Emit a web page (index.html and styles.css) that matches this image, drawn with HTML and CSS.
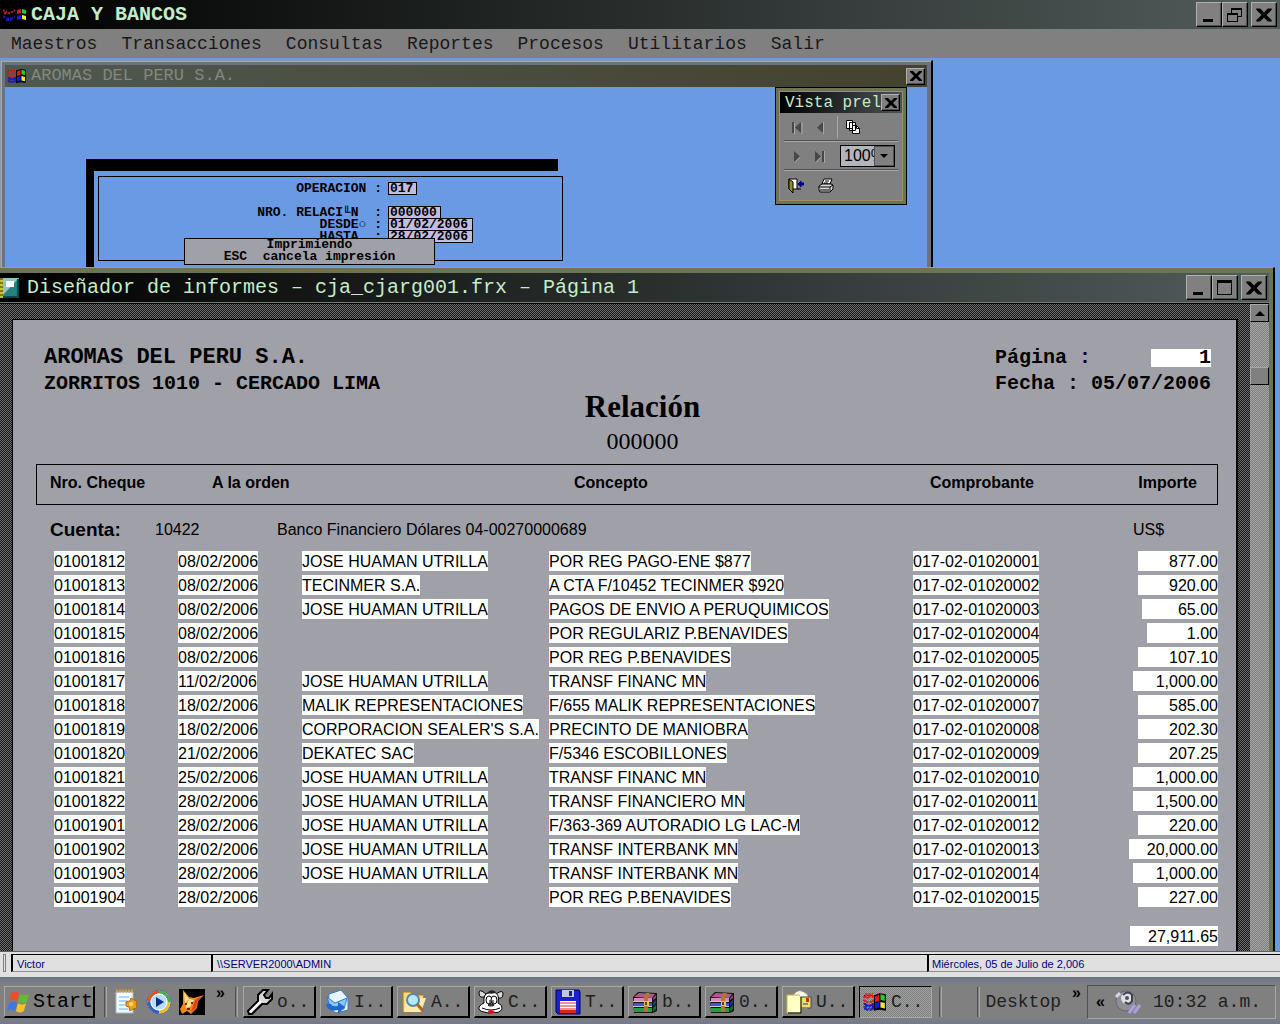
FILE: index.html
```html
<!DOCTYPE html>
<html lang="es">
<head>
<meta charset="utf-8">
<meta name="viewport" content="width=device-width, initial-scale=1">
<title>CAJA Y BANCOS</title>
<link rel="stylesheet" href="styles.css">
</head>
<body>
<svg class="defs" aria-hidden="true">
  <symbol id="flag" viewBox="0 0 22 18">
    <path d="M1 3h10v12H1z" fill="none" stroke="#000" stroke-width="1" stroke-dasharray="1 2"/>
    <path d="M1 4h2v1h3V4h4M1 8h3v1h3V8h3M2 2h7" stroke="#e02020" stroke-width="2" fill="none" stroke-dasharray="2 1"/>
    <path d="M1 11h3v1h3v-1h3M1 15h3v1h3v-1h3M2 13h8" stroke="#1818c8" stroke-width="2" fill="none" stroke-dasharray="2 1"/>
    <path d="M10 3l5-2 6 1v15l-6-1-5 1z" fill="#000"/>
    <path d="M11 4l4-2v6l-4 1z" fill="#e01818"/><path d="M16 2l4 1v5l-4-1z" fill="#20d020"/>
    <path d="M11 10l4-1v5l-4 1z" fill="#1818e0"/><path d="M16 9l4 1v5l-4-1z" fill="#f4f020"/>
  </symbol>
  <symbol id="close" viewBox="0 0 14 14"><path d="M1 2h3l3 3 3-3h3v1L9 7l4 4v1h-3L7 9l-3 3H1v-1l4-4-4-4z" fill="#000"/></symbol>
  <symbol id="minimize" viewBox="0 0 14 14"><path d="M1 11h10v3H1z" fill="#000"/></symbol>
  <symbol id="restore" viewBox="0 0 16 14"><path d="M4 0h11v9h-4v5H0V5h4zM5 2v3h6v3h3V2zM1 7v6h9V7z" fill="#000" fill-rule="evenodd"/></symbol>
  <symbol id="maximize" viewBox="0 0 16 16"><path d="M0 0h15v15H0zM1 3v11h13V3z" fill="#000" fill-rule="evenodd"/></symbol>
  <symbol id="books" viewBox="0 0 26 22">
    <path d="M1 6l5-5 19 1v18l-4 2H2z" fill="#151515"/>
    <path d="M2 6l5-4 16 1-3 4z" fill="#b05890"/><path d="M2 7h18v3H2z" fill="#d888c0"/><path d="M2 12h18v3H2z" fill="#3858e0"/><path d="M2 17h18v4H2z" fill="#20a040"/>
    <path d="M21 7l3-3v3l-3 2z" fill="#a04070"/><path d="M21 12l3-3v3l-3 3z" fill="#2038a0"/><path d="M21 17l3-3v4l-3 3z" fill="#107030"/>
    <path d="M1 10h19v1H1zM1 15h19v1H1z" fill="#c8c8c8"/><path d="M14 2h4l-2 4v15h-4V6z" fill="#b07828"/><path d="M12 10h5v5h-5z" fill="#e8c050"/><path d="M13 11h2v3h-2z" fill="#604010"/>
  </symbol>
</svg>

<header class="app-title">
  <svg class="app-flag" viewBox="0 0 23 14"><path d="M0 2l3 2 3 1 3-1 3-2M1 5l2 1" stroke="#c02020" stroke-width="2" fill="none" stroke-dasharray="2 1"/><path d="M0 8l3 2 4 1 5-2M3 12h6" stroke="#1818b0" stroke-width="2" fill="none" stroke-dasharray="3 1"/><path d="M14 2l4-1v4l-4 1z" fill="#e01818"/><path d="M19 1l4 1v4l-4-1z" fill="#20d020"/><path d="M14 8l4-1v4l-4 1z" fill="#1818e0"/><path d="M19 7l4 1v4l-4-1z" fill="#f4f020"/></svg>
  <h1 class="title-text">CAJA Y BANCOS</h1>
  <div class="window-buttons">
    <button class="win-btn" aria-label="Minimizar"><svg width="14" height="14"><use href="#minimize"/></svg></button>
    <button class="win-btn" aria-label="Restaurar"><svg width="16" height="14"><use href="#restore"/></svg></button>
    <button class="win-btn apart" aria-label="Cerrar"><svg width="18" height="18"><use href="#close"/></svg></button>
  </div>
</header>

<nav class="menu">
  <button>Maestros</button><button>Transacciones</button><button>Consultas</button><button>Reportes</button><button>Procesos</button><button>Utilitarios</button><button>Salir</button>
</nav>

<main class="workspace">
  <section class="window company">
    <div class="company-title">
      <svg width="20" height="16" viewBox="0 0 22 18"><use href="#flag"/></svg>
      <h2>AROMAS DEL PERU S.A.</h2>
      <button class="win-btn small" aria-label="Cerrar"><svg width="14" height="14"><use href="#close"/></svg></button>
    </div>
    <div class="company-body">
      <form class="filter">
        <div class="filter-box">
          <div class="field spaced"><label for="op">OPERACION :</label><input id="op" class="w3" value="017"></div>
          <div class="field"><label for="rel">NRO. RELACI╙N  :</label><input id="rel" class="w6" value="000000"></div>
          <div class="field"><label for="desde">DESDE○ :</label><input id="desde" class="w10" value="01/02/2006"></div>
          <div class="field"><label for="hasta">HASTA  :</label><input id="hasta" class="w10" value="28/02/2006"></div>
        </div>
      </form>
      <div class="printing" role="status"><span>Imprimiendo</span><span>ESC  cancela impresión</span></div>
    </div>
  </section>

  <section class="preview-bar">
    <div class="preview-title"><h2>Vista prel</h2>
      <button class="win-btn small" aria-label="Cerrar"><svg width="14" height="14"><use href="#close"/></svg></button>
    </div>
    <div class="tools">
      <button aria-label="Primera página"><svg width="12" height="13" viewBox="0 0 12 13"><path d="M1 1h2v11H1zM10 1v11L4 6.500z" fill="#484848"/><path d="M11 1v12M3.500 2v11" stroke="#a8a8a8"/></svg></button>
      <button aria-label="Anterior"><svg width="12" height="13" viewBox="0 0 12 13"><path d="M9 1v11L3 6.500z" fill="#484848"/><path d="M9.500 1v12" stroke="#a8a8a8"/></svg></button>
      <span class="divider"></span>
      <button aria-label="Ir a página"><svg width="14" height="14" viewBox="0 0 14 14"><path d="M.5.5h6v8h-6zM3.500 2.500h6v8h-6zM6.500 5.500h4l3 3v5h-7z" fill="#fff" stroke="#000"/><path d="M10.500 5.500v3h3" fill="none" stroke="#000"/></svg></button>
    </div>
    <div class="tools">
      <button aria-label="Siguiente"><svg width="12" height="13" viewBox="0 0 12 13"><path d="M3 1v11l6-5.500z" fill="#484848"/><path d="M9 7l-5 5.500" stroke="#a8a8a8"/></svg></button>
      <button aria-label="Última página"><svg width="12" height="13" viewBox="0 0 12 13"><path d="M1 1v11l6-5.500zM8 1h2v11H8z" fill="#484848"/><path d="M10.500 1v12M7 7l-5 5.500" stroke="#a8a8a8"/></svg></button>
      <div class="zoom"><select aria-label="Zoom"><option>100%</option></select><span class="zoom-arrow"><svg width="8" height="4" viewBox="0 0 8 4"><path d="M0 0h8L4 4z"/></svg></span></div>
    </div>
    <div class="tools last">
      <button aria-label="Cerrar vista"><svg width="16" height="16" viewBox="0 0 16 16"><path d="M1 1h8v10H1z" fill="#fff" stroke="#000"/><path d="M1 1l4 3v11l-4-4z" fill="#909018" stroke="#000"/><path d="M9 11h4" stroke="#000"/><path d="M10 6l3-3v2h3v2h-3v2z" fill="#000090" stroke="#000090"/></svg></button>
      <button aria-label="Imprimir"><svg width="16" height="15" viewBox="0 0 16 15"><path d="M4 6l2-5h8l-2 5z" fill="#fff" stroke="#000"/><path d="M7 3h4M6 5h4" stroke="#000"/><path d="M1 8l3-2h9l2 1v4l-3 3H2l-1-2z" fill="#d8d8d8" stroke="#000"/><path d="M1 9h11v4M2 12h9M12 9l3-2" stroke="#000" fill="none"/></svg></button>
    </div>
  </section>

  <section class="report">
    <div class="report-title">
      <svg class="report-icon" width="20" height="20" viewBox="0 0 20 20"><path d="M0 0h3v20H0z" fill="#c8c040"/><path d="M0 1h3M0 5h3M0 9h3M0 13h3M0 17h3" stroke="#303010"/><path d="M3 0h16v19H3z" fill="#258080"/><path d="M3 0h16L3 17z" fill="#90c8c0"/><path d="M6 3h8v6H6z" fill="#fff"/><path d="M18 1v18H3" stroke="#104848" stroke-width="2" fill="none"/></svg>
      <h2 class="title-text">Diseñador de informes – cja_cjarg001.frx – Página 1</h2>
      <div class="window-buttons">
        <button class="win-btn" aria-label="Minimizar"><svg width="14" height="14"><use href="#minimize"/></svg></button>
        <button class="win-btn" aria-label="Maximizar"><svg width="16" height="16"><use href="#maximize"/></svg></button>
        <button class="win-btn apart" aria-label="Cerrar"><svg width="18" height="18"><use href="#close"/></svg></button>
      </div>
    </div>
    <div class="report-client">
      <article class="sheet">
        <div class="letterhead">
          <div class="company-lines"><p class="company-name">AROMAS DEL PERU S.A.</p><p>ZORRITOS 1010 - CERCADO LIMA</p></div>
          <div class="report-name"><h3>Relación</h3><p>000000</p></div>
          <div class="page-info"><p><span>Página :</span><span class="page-no">1</span></p><p>Fecha : 05/07/2006</p></div>
        </div>
        <table>
          <colgroup><col class="c-cheque"><col class="c-fecha"><col class="c-orden"><col><col class="c-comp"><col class="c-imp"></colgroup>
          <thead><tr><th>Nro. Cheque</th><th colspan="2">A la orden</th><th>Concepto</th><th>Comprobante</th><th>Importe</th></tr></thead>
          <tbody>
            <tr class="account"><td colspan="5"><div class="account-line"><b>Cuenta:</b><span class="account-no">10422</span><span>Banco Financiero Dólares 04-00270000689</span></div></td><td>US$</td></tr>
            <tr><td><span>01001812</span></td><td><span>08/02/2006</span></td><td><span>JOSE HUAMAN UTRILLA</span></td><td><span>POR REG PAGO-ENE $877</span></td><td><span>017-02-01020001</span></td><td><span>       877.00</span></td></tr>
            <tr><td><span>01001813</span></td><td><span>08/02/2006</span></td><td><span>TECINMER S.A.</span></td><td><span>A CTA F/10452 TECINMER $920</span></td><td><span>017-02-01020002</span></td><td><span>       920.00</span></td></tr>
            <tr><td><span>01001814</span></td><td><span>08/02/2006</span></td><td><span>JOSE HUAMAN UTRILLA</span></td><td><span>PAGOS DE ENVIO A PERUQUIMICOS</span></td><td><span>017-02-01020003</span></td><td><span>        65.00</span></td></tr>
            <tr><td><span>01001815</span></td><td><span>08/02/2006</span></td><td></td><td><span>POR REGULARIZ P.BENAVIDES</span></td><td><span>017-02-01020004</span></td><td><span>         1.00</span></td></tr>
            <tr><td><span>01001816</span></td><td><span>08/02/2006</span></td><td></td><td><span>POR REG P.BENAVIDES</span></td><td><span>017-02-01020005</span></td><td><span>       107.10</span></td></tr>
            <tr><td><span>01001817</span></td><td><span>11/02/2006</span></td><td><span>JOSE HUAMAN UTRILLA</span></td><td><span>TRANSF FINANC MN</span></td><td><span>017-02-01020006</span></td><td><span>     1,000.00</span></td></tr>
            <tr><td><span>01001818</span></td><td><span>18/02/2006</span></td><td><span>MALIK REPRESENTACIONES</span></td><td><span>F/655 MALIK REPRESENTACIONES</span></td><td><span>017-02-01020007</span></td><td><span>       585.00</span></td></tr>
            <tr><td><span>01001819</span></td><td><span>18/02/2006</span></td><td><span>CORPORACION SEALER'S S.A.</span></td><td><span>PRECINTO DE MANIOBRA</span></td><td><span>017-02-01020008</span></td><td><span>       202.30</span></td></tr>
            <tr><td><span>01001820</span></td><td><span>21/02/2006</span></td><td><span>DEKATEC SAC</span></td><td><span>F/5346 ESCOBILLONES</span></td><td><span>017-02-01020009</span></td><td><span>       207.25</span></td></tr>
            <tr><td><span>01001821</span></td><td><span>25/02/2006</span></td><td><span>JOSE HUAMAN UTRILLA</span></td><td><span>TRANSF FINANC MN</span></td><td><span>017-02-01020010</span></td><td><span>     1,000.00</span></td></tr>
            <tr><td><span>01001822</span></td><td><span>28/02/2006</span></td><td><span>JOSE HUAMAN UTRILLA</span></td><td><span>TRANSF FINANCIERO MN</span></td><td><span>017-02-01020011</span></td><td><span>     1,500.00</span></td></tr>
            <tr><td><span>01001901</span></td><td><span>28/02/2006</span></td><td><span>JOSE HUAMAN UTRILLA</span></td><td><span>F/363-369 AUTORADIO LG LAC-M</span></td><td><span>017-02-01020012</span></td><td><span>       220.00</span></td></tr>
            <tr><td><span>01001902</span></td><td><span>28/02/2006</span></td><td><span>JOSE HUAMAN UTRILLA</span></td><td><span>TRANSF INTERBANK MN</span></td><td><span>017-02-01020013</span></td><td><span>    20,000.00</span></td></tr>
            <tr><td><span>01001903</span></td><td><span>28/02/2006</span></td><td><span>JOSE HUAMAN UTRILLA</span></td><td><span>TRANSF INTERBANK MN</span></td><td><span>017-02-01020014</span></td><td><span>     1,000.00</span></td></tr>
            <tr><td><span>01001904</span></td><td><span>28/02/2006</span></td><td></td><td><span>POR REG P.BENAVIDES</span></td><td><span>017-02-01020015</span></td><td><span>       227.00</span></td></tr>
            <tr class="total"><td colspan="5"></td><td><span>    27,911.65</span></td></tr>
          </tbody>
        </table>
      </article>
      <div class="scrollbar"><button class="scroll-up" aria-label="Subir"><svg width="10" height="5" viewBox="0 0 10 5"><path d="M0 5h10L5 0z"/></svg></button><div class="thumb"></div></div>
    </div>
  </section>
</main>

<div class="status"><span class="grip"></span><span class="st-user">Victor</span><span class="st-server">\\SERVER2000\ADMIN</span><span class="st-date">Miércoles, 05 de Julio de 2,006</span></div>

<footer class="taskbar">
  <button class="start"><svg width="24" height="22" viewBox="0 0 24 22"><path d="M4 2q4-3 8 0l-2 8q-4-2-8 0z" fill="#e8502c"/><path d="M13 3q4 2 9 0l-2 8q-5 2-9 0z" fill="#68b838"/><path d="M2 12q4-3 8 0l-2 8q-4-3-8 0z" fill="#3c78e0"/><path d="M11 12q4 3 8 0l-2 8q-4 3-8 0z" fill="#f4c030"/></svg><span>Start</span></button>
  <span class="bar first"></span>
  <div class="quick">
    <button aria-label="Notas"><svg width="26" height="26" viewBox="0 0 26 26"><path d="M3 3h17v21H3z" fill="#f4f8ff" stroke="#a8b8c8"/><path d="M3 2h17" stroke="#d0a040" stroke-width="3" stroke-dasharray="2 1"/><path d="M6 8h10M6 12h9M6 16h6M6 20h9" stroke="#60b8e8"/><path d="M13 13l4-1 1-3 3 2 3 1-1 3 1 4-4 1-3 2-1-4-3-1z" fill="#f0a018" stroke="#b06808"/><circle cx="18" cy="15" r="2" fill="#ffe080"/></svg></button>
    <button aria-label="Reproductor"><svg width="26" height="26" viewBox="0 0 26 26"><circle cx="13" cy="13" r="12" fill="#d8e4f0" stroke="#5068a0"/><path d="M13 3a10 10 0 0 0-10 10" stroke="#e05020" stroke-width="3" fill="none"/><path d="M13 3a10 10 0 0 1 10 10" stroke="#50a850" stroke-width="3" fill="none"/><path d="M23 13a10 10 0 0 1-10 10" stroke="#e8c030" stroke-width="3" fill="none"/><path d="M3 13a10 10 0 0 0 10 10" stroke="#3060c8" stroke-width="3" fill="none"/><circle cx="13" cy="13" r="8" fill="#b8dcff" stroke="#fff"/><path d="M10 8l8 5-8 5z" fill="#10308c"/></svg></button>
    <button aria-label="FoxPro"><svg width="26" height="26" viewBox="0 0 26 26"><path d="M0 0h26v26H0z"/><path d="M4 1l6 7 5 1 10-3-6 6-1 7-6 6-4-3-5 3-2-5 3-5z" fill="#f08820"/><path d="M5 3l5 7-4 5zM10 10l5 1-4 7-5 1z" fill="#ffe090"/><path d="M16 11l7-4-5 6-1 6-5 4z" fill="#e04010"/><path d="M6 15h2M12 14h2M8 20h3" stroke="#802000" stroke-width="2"/></svg></button>
  </div>
  <span class="chevron">»</span>
  <span class="bar second"></span>
  <div class="tasks">
    <button><svg width="26" height="26" viewBox="0 0 26 26"><path d="M1 22l10-10V6l5-5h5l-4 5 2 3h3l3-4v5l-5 5h-5L5 25H2z" fill="#d8d8d8" stroke="#000" stroke-width="2"/><path d="M3 23l11-11" stroke="#fff" stroke-width="2"/></svg>o..</button>
    <button><svg width="26" height="26" viewBox="0 0 26 26"><path d="M5 5L17 1l7 8v12l-12 3-8-6z" fill="#e8f4ff" stroke="#3878c0"/><path d="M3 8l8 6 12-5-3 11-13 1z" fill="#88c8ff" stroke="#3878c0"/><path d="M2 15q1 8 12 6v4l7-7-7-5v4q-6 1-7-2z" fill="#2068d0"/></svg>I..</button>
    <button><svg width="26" height="26" viewBox="0 0 26 26"><path d="M2 3h8l2 3h11l-3 17H2z" fill="#f8d878" stroke="#a87820"/><path d="M5 9h20l-5 14H3z" fill="#ffecac"/><circle cx="12" cy="11" r="6" fill="#b8e8f8" stroke="#5888a8" stroke-width="2"/><path d="M16 15l6 7" stroke="#a86828" stroke-width="3"/></svg>A..</button>
    <button><svg width="26" height="26" viewBox="0 0 26 26"><path d="M8 5Q1-1 1 4t5 4M18 5q7-5 7 0t-5 4" fill="#d8d8d8" stroke="#000"/><path d="M6 14Q5 5 10 4l6-1q6 2 4 11 5 2 4 6-3 5-9 3-5 2-9 0-6-1-5-5 2-3 5-4z" fill="#f8f8f8" stroke="#000"/><path d="M9 4q4-5 9-1-2 3-9 1" fill="#222"/><ellipse cx="11" cy="11" rx="3" ry="4" fill="#fff" stroke="#000"/><ellipse cx="16" cy="11" rx="3" ry="4" fill="#fff" stroke="#000"/><path d="M12 11v3M15 11v3" stroke="#000" stroke-width="1"/><ellipse cx="13" cy="16" rx="3" ry="1" fill="#888" stroke="#000"/><path d="M4 19q9 4 18 0" stroke="#000" fill="none"/><ellipse cx="13" cy="23" rx="3" ry="2" fill="#e01020"/></svg>C..</button>
    <button><svg width="26" height="26" viewBox="0 0 26 26"><path d="M1 1h23l1 2v22H3l-2-2z" fill="#1820d0" stroke="#000060"/><path d="M7 1h12v7H7z" fill="#c0c8e0"/><path d="M14 2h3v5h-3z" fill="#1820a0"/><path d="M5 12h16v12H5z" fill="#fff"/><path d="M5 14h16M5 17h16M5 20h16" stroke="#e02020"/><path d="M5 21h16v3H5z" fill="#e02020"/></svg>T..</button>
    <button><svg width="26" height="22"><use href="#books"/></svg>b..</button>
    <button><svg width="26" height="22"><use href="#books"/></svg>0..</button>
    <button><svg width="26" height="26" viewBox="0 0 26 26"><path d="M7 6q6-9 15 0v14H7z" fill="#f8f8e8" stroke="#888"/><path d="M12 8h13v11H12z" fill="#f0e060" stroke="#444"/><path d="M20 9h3v4h-3z" fill="#d82020"/><path d="M17 15h5" stroke="#2030c0"/><path d="M1 6h12l2 2v16H1z" fill="#ffffc8" stroke="#c8b840"/><path d="M15 8v16H2" fill="none" stroke="#000"/></svg>U..</button>
    <button class="active"><svg width="24" height="20" viewBox="0 0 22 18"><use href="#flag"/></svg>C..</button>
  </div>
  <span class="bar third"></span>
  <span class="bar fourth"></span>
  <a class="desk" href="#">Desktop</a>
  <span class="chevron">»</span>
  <div class="tray"><span class="tray-more">«</span><svg width="28" height="26" viewBox="0 0 28 26"><circle cx="12" cy="12" r="10" fill="#909094" stroke="#686870"/><circle cx="13" cy="9" r="6" fill="#e0e0e8"/><path d="M9 6q5-5 9 0v6q-3 5-7 1" fill="none" stroke="#404048" stroke-width="2"/><circle cx="13" cy="9" r="2" fill="#505058"/><path d="M15 24l6-8M20 24l6-8" stroke="#a8a0e0" stroke-width="3"/><path d="M2 8l4-4" stroke="#d8d8e8" stroke-width="3"/></svg><time>10:32 a.m.</time></div>
</footer>
</body>
</html>
```

FILE: styles.css
```css
:root {
  --sky: #6a9ae4;
  --face: #808080;
  --light: #a8a8a8;
  --paper: #a0a0a8;
  --mono: "Liberation Mono", "Courier New", monospace;
  --sans: "Liberation Sans", Arial, sans-serif;
}
* { box-sizing: border-box; }
body {
  margin: 0;
  min-height: 100vh;
  display: flex;
  flex-direction: column;
  background: var(--sky);
  font-family: var(--sans);
  color: #000;
  overflow-x: hidden;
}
h1, h2, h3, p { margin: 0; font-weight: normal; }
button { font: inherit; color: inherit; padding: 0; border: 0; background: none; }
.defs { position: absolute; width: 0; height: 0; }

/* Title bars */
.app-title {
  height: 29px;
  display: flex;
  align-items: center;
  gap: 5px;
  padding: 0 3px;
  background: linear-gradient(90deg, #000, #525c5a);
}
.app-flag { width: 23px; height: 14px; }
.title-text {
  flex: 1;
  font: 20px/24px var(--mono);
  color: #c4ecc8;
  white-space: nowrap;
  overflow: hidden;
}
.app-title .title-text { font-weight: bold; }
.window-buttons { display: flex; }
.win-btn {
  width: 26px;
  height: 25px;
  display: flex;
  align-items: center;
  justify-content: center;
  background: var(--face);
  border: 1px solid #000;
  border-top-color: #b0b0b0;
  border-left-color: #b0b0b0;
  box-shadow: inset -1px -1px #505050;
}
.win-btn.apart { margin-left: 3px; }
.win-btn.small { width: 19px; height: 17px; }

.menu {
  height: 29px;
  display: flex;
  align-items: center;
  background: var(--face);
  font: 18px/28px var(--mono);
  color: #181818;
}
.menu button { padding: 0 12px; }
.menu button:first-child { padding-left: 11px; }

/* Workspace */
.workspace { position: relative; flex: 1; min-height: 893px; overflow: hidden; }
.company {
  position: absolute;
  top: 2px;
  left: 0;
  width: 933px;
  height: 230px;
  display: flex;
  flex-direction: column;
  padding: 4px 4px 0;
  background: #6c7280;
  border: 1px solid #9098a8;
  border-right: 2px solid #000020;
  box-shadow: inset 1px 1px #a0a8b4;
}
.company-title {
  height: 22px;
  display: flex;
  align-items: center;
  gap: 4px;
  padding: 0 2px;
  background: linear-gradient(90deg, #50584e, #44422f);
  color: #848880;
}
.company-title h2 { flex: 1; font: 17px/20px var(--mono); }
.company-body { position: relative; flex: 1; background: var(--sky); }
.filter {
  position: absolute;
  top: 72px;
  left: 81px;
  width: 472px;
  height: 130px;
  border-top: 12px solid #000;
  border-left: 8px solid #000;
}
.filter-box {
  width: 465px;
  height: 85px;
  margin: 5px 0 0 4px;
  padding-top: 6px;
  border: 1px solid #000;
  font: bold 13px/12px var(--mono);
}
.field {
  height: 12px;
  display: grid;
  grid-template-columns: 283px 1fr;
  column-gap: 6px;
}
.field.spaced { margin-bottom: 12px; }
.field label { text-align: right; white-space: pre; }
.field input {
  height: 13px;
  margin-top: -1px;
  padding: 0 1px;
  border: 1px solid #000;
  border-radius: 0;
  background: #c4bce0;
  color: #000;
  font: inherit;
  line-height: 11px;
}
.field .w3 { width: 29px; }
.field .w6 { width: 53px; }
.field .w10 { width: 85px; }
.printing {
  position: absolute;
  top: 151px;
  left: 179px;
  width: 251px;
  height: 27px;
  display: flex;
  flex-direction: column;
  align-items: center;
  background: var(--paper);
  border: 1px solid #000;
  font: bold 13px/12px var(--mono);
  white-space: pre;
}

/* Print preview toolbar */
.preview-bar {
  position: absolute;
  top: 29px;
  left: 775px;
  width: 132px;
  height: 118px;
  background: var(--face);
  border: 4px solid #6c7454;
  outline: 1px solid #000;
  outline-offset: -1px;
  box-shadow: inset 0 0 0 1px #98945c;
}
.preview-title {
  height: 21px;
  margin: 1px 1px 0;
  padding: 0 2px 0 5px;
  display: flex;
  align-items: center;
  background: linear-gradient(90deg, #000, #4c5454);
  color: #c4ecc8;
}
.preview-title h2 { flex: 1; width: 0; overflow: hidden; white-space: nowrap; font: 16px/20px var(--mono); }
.tools {
  height: 29px;
  margin: 0 5px;
  padding-left: 7px;
  display: flex;
  align-items: center;
  gap: 11px;
  border-bottom: 1px solid var(--light);
  box-shadow: inset 0 -1px #505050;
}
.tools.last { border: 0; box-shadow: none; padding-left: 4px; gap: 14px; }
.tools button { display: flex; }
.divider { width: 1px; height: 22px; margin-right: -3px; background: var(--light); }
.zoom { width: 55px; height: 22px; margin-left: 3px; display: flex; border: 1px solid #000; background: #b4b4bc; }
.zoom select {
  width: 33px;
  padding: 0 0 0 3px;
  appearance: none;
  border: 0;
  border-radius: 0;
  background: none;
  color: #000;
  font: 16px/20px var(--sans);
  text-overflow: clip;
}
.zoom-arrow { flex: 1; display: flex; align-items: center; justify-content: center; background: var(--face); border: 1px solid #505050; }

/* Report window */
.report {
  position: absolute;
  top: 209px;
  left: 0;
  right: 5px;
  bottom: 0;
  display: flex;
  flex-direction: column;
  padding: 5px 4px 0 0;
  background: #6c7454;
  border-top: 1px solid #98a088;
  border-right: 2px solid #000;
}
.report-title {
  height: 30px;
  flex: none;
  display: flex;
  align-items: center;
  gap: 7px;
  padding-right: 2px;
  background: linear-gradient(90deg, #000, #525c5a);
  border-bottom: 1px solid #70806c;
}
.report-client {
  flex: 1;
  display: flex;
  border-top: 1px solid #000;
  background: repeating-conic-gradient(#181818 0 25%, #6c6c6c 0 50%) 0 0 / 2px 2px;
}
.sheet {
  flex: 1;
  margin: 15px 12px 0 12px;
  padding: 25px 18px 0 23px;
  background: var(--paper);
  border: 1px solid #000;
  border-right-width: 2px;
  border-bottom: 0;
}
.letterhead {
  height: 119px;
  padding: 0 7px 0 8px;
  display: grid;
  grid-template-columns: 1fr auto 1fr;
  font: bold 20px/26px var(--mono);
}
.company-name { font-size: 22px; }
.letterhead p { font-weight: inherit; }
.report-name { padding: 44px 0 0 30px; text-align: center; font: 24px/32px "Liberation Serif", "Times New Roman", serif; }
.report-name h3 { font-size: 31px; line-height: 36px; font-weight: bold; }
.page-info { justify-self: end; }
.page-info p { display: flex; justify-content: space-between; align-items: center; }
.page-no { width: 60px; height: 18px; line-height: 18px; background: #fff; text-align: right; }

table { width: 100%; table-layout: fixed; border-collapse: separate; border-spacing: 0; font-size: 16px; line-height: 20px; }
.c-cheque { width: 142px; }
.c-fecha { width: 124px; }
.c-orden { width: 247px; }
.c-comp { width: 187px; }
.c-imp { width: 118px; }
th, td { padding: 0; text-align: left; white-space: nowrap; }
th { height: 41px; padding-bottom: 4px; border: solid #000; border-width: 1px 0; }
th:nth-child(1) { padding-left: 13px; border-left-width: 1px; }
th:nth-child(2) { padding-left: 34px; }
th:nth-child(3) { padding-left: 25px; }
th:nth-child(4) { padding-left: 17px; }
th:nth-child(5) { padding-right: 20px; text-align: right; border-right-width: 1px; }
td { height: 24px; }
td:first-child { padding-left: 18px; }
td:last-child { text-align: right; }
td > span { display: inline-block; height: 20px; line-height: 21px; background: #fff; white-space: pre; vertical-align: middle; }
.account td { height: 44px; padding-top: 6px; }
.account td:first-child { padding-left: 14px; }
.account td:last-child { padding-left: 33px; text-align: left; }
.account-line { display: flex; align-items: center; }
.account-line b { width: 105px; font-size: 19px; }
.account-no { width: 122px; }
.total td { height: 42px; padding-top: 12px; }

.scrollbar { width: 19px; background: repeating-conic-gradient(#808080 0 25%, #a4a4a4 0 50%) 0 0 / 2px 2px; }
.scroll-up, .thumb {
  width: 19px;
  height: 18px;
  display: flex;
  align-items: center;
  justify-content: center;
  background: var(--face);
  border: 1px solid #000;
  border-top-color: var(--light);
  border-left-color: var(--light);
}
.thumb { margin-top: 45px; }

/* Status bar */
.status {
  height: 28px;
  display: flex;
  padding: 2px 0 5px 3px;
  background: #e0e0e0;
  border-top: 1px solid #606060;
  border-bottom: 2px solid #70747c;
  font-size: 11px;
  line-height: 18px;
  color: #000080;
}
.grip { width: 3px; margin-right: 5px; border: 1px solid #808080; }
.st-user, .st-server, .st-date { padding-left: 4px; border-top: 1px solid #000; border-left: 2px solid #000; border-bottom: 1px solid #909090; white-space: nowrap; }
.st-user { width: 200px; }
.st-server { flex: 1; }
.st-date { width: 353px; padding-left: 3px; }

/* Taskbar */
.taskbar {
  height: 45px;
  display: flex;
  align-items: center;
  padding: 1px 4px 0;
  background: linear-gradient(#70788c, var(--face) 6px 38px, #74788c);
  font: 18px/28px var(--mono);
}
.start, .tasks button {
  height: 32px;
  display: flex;
  align-items: center;
  border: 1px solid var(--light);
  border-right: 2px solid #000;
  border-bottom: 2px solid #000;
  background: var(--face);
}
.start { width: 91px; gap: 2px; padding-left: 2px; font-size: 20px; }
.bar { width: 3px; height: 30px; flex: none; border-left: 1px solid #505050; border-right: 1px solid var(--light); }
.bar.first { margin: 0 6px 0 9px; }
.bar.second { margin: 0 5px 0 9px; }
.bar.third { margin: 0 35px 0 auto; }
.bar.fourth { margin-right: 5px; }
.quick { display: flex; gap: 7px; }
.quick button { display: flex; }
.chevron { align-self: flex-start; margin: 3px 0 0 11px; }
.chevron, .tray-more { width: 10px; font: bold 16px/20px var(--sans); }
.tasks { display: flex; gap: 4px; }
.tasks button { width: 73px; gap: 4px; padding-left: 3px; color: #202020; white-space: nowrap; overflow: hidden; }
.tasks svg { flex: none; }
.tasks .active {
  border: 1px solid #000;
  border-right-color: var(--light);
  border-bottom-color: var(--light);
  background: repeating-conic-gradient(#808080 0 25%, #a0a0a0 0 50%) 0 0 / 2px 2px;
}
.desk { color: #202020; text-decoration: none; }
.tray {
  width: 189px;
  height: 34px;
  margin-left: 5px;
  padding-left: 8px;
  display: flex;
  align-items: center;
  gap: 8px;
  border: 1px solid #505050;
  border-right-color: var(--light);
  border-bottom-color: var(--light);
}
.tray time { margin-left: 3px; color: #202020; white-space: nowrap; }
```
